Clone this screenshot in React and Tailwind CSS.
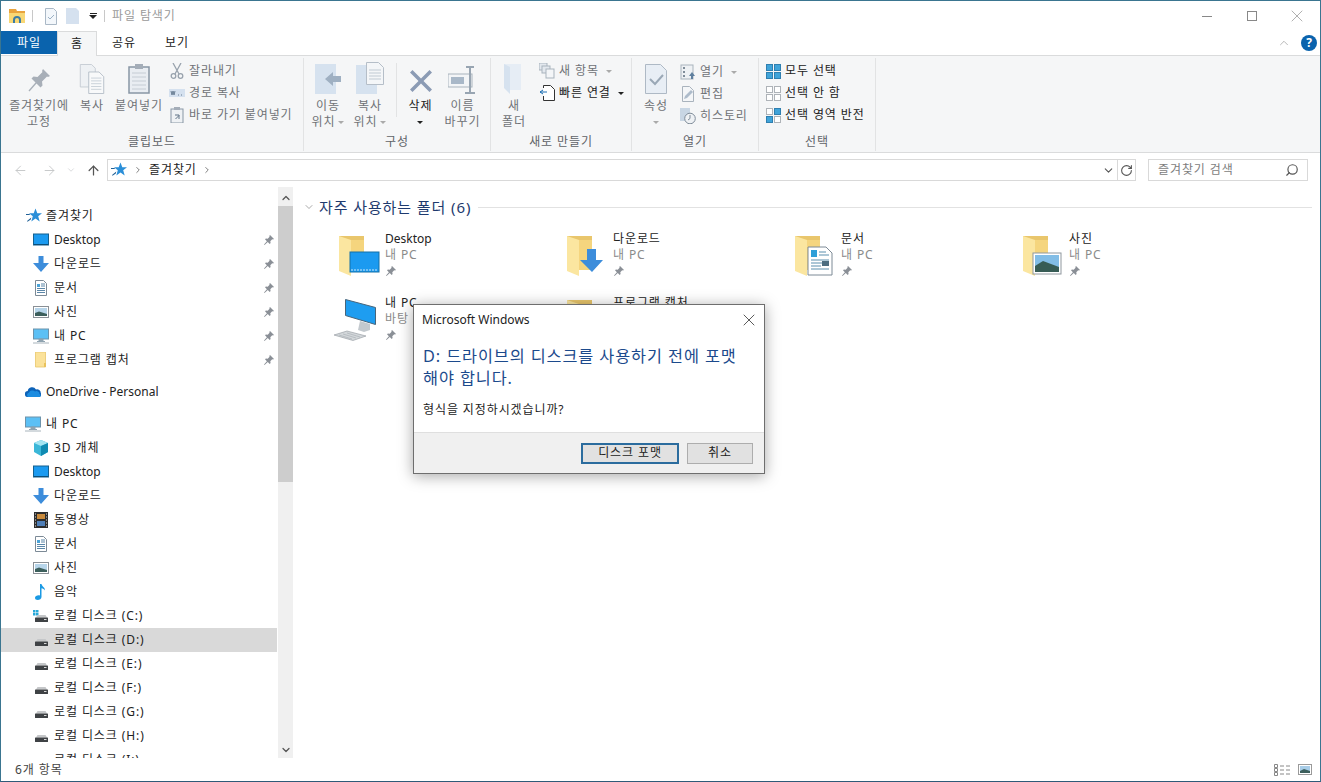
import React from "react";
import { ArrowLeft, ArrowRight, ArrowUp, ChevronDown, ChevronRight, ChevronUp, RotateCw, Search, X } from "lucide-react";

// small drawings used all over the window
function Pin({ className = "", color = "#8a8f96" }) {
  return (
    <svg width="12" height="12" viewBox="0 0 12 12" className={className}>
      <path d="M7 1l4 4-1 .6-.8-.3L7.300 7.200l.3 1.800-.9.9-1.900-1.900L1.500 11 1 10.500l2.900-3.300L2 5.300l.9-.9 1.800.3 1.900-1.900-.3-.8z" fill={color} />
    </svg>
  );
}

function Star({ size = 16 }) {
  return (
    <svg width={size} height={size} viewBox="0 0 16 16">
      <path d="M9.500 .5l1.800 4.800H16l-3.800 3 1.500 5.200-4.200-3-4.200 3 1.500-5.200-3.800-3h4.700z" fill="#2b8fd8" />
      <path d="M5.300 9.500L1 13l.5.800 3.300-2.300zM4 6H0v1h3.500z" fill="#1f5f95" />
    </svg>
  );
}

function Monitor() {
  return (
    <svg width="16" height="16" viewBox="0 0 16 16">
      <rect x="0.500" y="2" width="15" height="11" fill="#1b9af0" stroke="#14608f" />
      <path d="M1 12h14v1H1z" fill="#0c4e78" />
    </svg>
  );
}

function DownArrow({ size = 16 }) {
  return (
    <svg width={size} height={size} viewBox="0 0 16 16">
      <path d="M5.500 0h5v7H16l-8 9-8-9h5.500z" fill="#3d8ddb" />
    </svg>
  );
}

function DocIcon() {
  return (
    <svg width="16" height="16" viewBox="0 0 16 16">
      <path d="M2.500.5h8l3 3v12h-11z" fill="#fff" stroke="#7c8a96" />
      <path d="M4 4h3v3H4z" fill="#4aa3d8" />
      <path d="M8 4h4M8 6h4M4 8.500h8M4 10.500h8M4 12.500h8" stroke="#5c87a8" />
    </svg>
  );
}

function PhotoIcon() {
  return (
    <svg width="16" height="16" viewBox="0 0 16 16">
      <rect x="0.500" y="2.500" width="15" height="11" fill="#fff" stroke="#8a9096" />
      <rect x="2" y="4" width="12" height="8" fill="#b7d5ea" />
      <path d="M2 9l4-1.500L14 10v2H2z" fill="#3c5f5c" />
    </svg>
  );
}

function PcIcon() {
  return (
    <svg width="16" height="16" viewBox="0 0 16 16">
      <rect x="0.500" y="1" width="15" height="10" fill="#5cc0f5" stroke="#6d93ab" />
      <path d="M6 11h4v2H6zM4 13.500h8" fill="#8fa3b0" stroke="#8fa3b0" />
      <path d="M0 15h16" stroke="#a8b4bc" />
    </svg>
  );
}

function SmallFolder() {
  return (
    <svg width="16" height="16" viewBox="0 0 16 16">
      <path d="M2.500 0h10v15h-10z" fill="#fbe29a" stroke="#e8c76a" strokeWidth="0.800" />
      <path d="M11 11h2v4h-2z" fill="#e9c25c" />
    </svg>
  );
}

function Cloud() {
  return (
    <svg width="16" height="16" viewBox="0 0 16 16">
      <path d="M3 13a3 3 0 0 1-.3-6 4.500 4.500 0 0 1 8.300-1.500 3.700 3.700 0 0 1 4.800 3.500A2.500 2.500 0 0 1 14 13z" fill="#0d62b8" />
      <path d="M3 13a2.600 2.600 0 0 1 1-4.500 4 4 0 0 1 6-1 3 3 0 0 1 4.500 2.500c1 .2 1.500 1.500.5 3z" fill="#1c8ce0" />
    </svg>
  );
}

function Cube() {
  return (
    <svg width="16" height="16" viewBox="0 0 16 16">
      <path d="M8 0l7 3v9l-7 4-7-4V3z" fill="#3bb7d8" />
      <path d="M8 0l7 3-7 3-7-3z" fill="#a5e5f2" />
      <path d="M8 6l7-3v9l-7 4z" fill="#0f8bb2" />
    </svg>
  );
}

function Film() {
  return (
    <svg width="16" height="16" viewBox="0 0 16 16">
      <rect x="1" y="0" width="14" height="16" fill="#2d2d2d" />
      <rect x="4" y="2" width="8" height="5" fill="#c98a3b" />
      <rect x="4" y="9" width="8" height="5" fill="#4f7fb8" />
      <path d="M2 2h1M2 5h1M2 8h1M2 11h1M2 14h1M13 2h1M13 5h1M13 8h1M13 11h1M13 14h1" stroke="#ddd" />
    </svg>
  );
}

function Music() {
  return (
    <svg width="16" height="16" viewBox="0 0 16 16">
      <path d="M7 0h1.500c.3 2.500 3.500 3 3.500 6.500-1-1.500-2-2-3.500-2.300V13c0 2-2 3-3.700 3C3 16 2 15 2 13.700 2 12 4.500 11 7 11.500z" fill="#1b9ae4" />
    </svg>
  );
}

function Drive({ windows = false }) {
  return (
    <svg width="16" height="16" viewBox="0 0 16 16">
      {windows && <path d="M0 2h2.500v2.500H0zM3 2h2.500v2.500H3zM0 5h2.500v2.500H0zM3 5h2.500v2.500H3z" fill="#28a8d8" />}
      <path d="M3 9.500L4.500 7h8L14 9.500z" fill="#c5c7c9" />
      <rect x="2" y="9.500" width="13" height="4.500" rx="0.500" fill="#3f4245" />
      <path d="M11 11.500h2.500" stroke="#d8d8d8" />
    </svg>
  );
}

function FolderBig({ children }) {
  return (
    <svg width="42" height="42" viewBox="0 0 42 42">
      <path d="M1 1h25v34H1z" fill="#e9c66c" />
      <path d="M1 1l12 4v36L1 36z" fill="#fbe6a0" />
      <path d="M13 5h13v30H13z" fill="#f5d57e" />
      {children}
    </svg>
  );
}

const desktopOverlay = (
  <g>
    <rect x="12" y="17" width="29" height="20" fill="#1b9af0" stroke="#1470a8" />
    <path d="M13 35h27" stroke="#cfe8f8" strokeDasharray="2 1" />
  </g>
);
const downloadOverlay = <path d="M21 14h9v11h7L26 37 14 25h7z" fill="#3d8ddb" />;
const docOverlay = (
  <g>
    <path d="M14 12h18l6 6v22H14z" fill="#fff" stroke="#7d8a96" />
    <path d="M17 15h6v7h-6z" fill="#2f9fd8" />
    <path d="M25 17h7M25 20h10M17 25h18M17 28h18M17 31h10M17 34h18" stroke="#5a8fae" />
    <rect x="28" y="26" width="7" height="5" fill="#4c6d80" />
  </g>
);
const photoOverlay = (
  <g>
    <rect x="11" y="18" width="28" height="21" fill="#fff" stroke="#8f979e" />
    <rect x="13" y="20" width="24" height="17" fill="#82bde6" />
    <path d="M13 31l8-5 16 6v5H13z" fill="#375c55" />
  </g>
);

function ComputerBig() {
  return (
    <svg width="44" height="42" viewBox="0 0 44 42">
      <path d="M12.500 .5l30 8v17l-30-9z" fill="#1e9df0" stroke="#48657a" />
      <path d="M27 22l10 3v6l-6 2-6-2z" fill="#c3c9ce" />
      <path d="M1 36l13-4 19 5-13 4.500z" fill="#d3d7da" stroke="#8e969c" strokeWidth="0.600" />
      <path d="M6 36l13 4M10 35l13 4M14 34l13 4" stroke="#9aa2a8" strokeWidth="0.500" />
    </svg>
  );
}

const navRows = [
  { icon: <Monitor />, label: "Desktop", pin: true },
  { icon: <DownArrow />, label: "다운로드", pin: true },
  { icon: <DocIcon />, label: "문서", pin: true },
  { icon: <PhotoIcon />, label: "사진", pin: true },
  { icon: <PcIcon />, label: "내 PC", pin: true },
  { icon: <SmallFolder />, label: "프로그램 캡처", pin: true },
  { gap: true },
  { icon: <Cloud />, label: "OneDrive - Personal", top: true },
  { gap: true },
  { icon: <PcIcon />, label: "내 PC", top: true },
  { icon: <Cube />, label: "3D 개체" },
  { icon: <Monitor />, label: "Desktop" },
  { icon: <DownArrow />, label: "다운로드" },
  { icon: <Film />, label: "동영상" },
  { icon: <DocIcon />, label: "문서" },
  { icon: <PhotoIcon />, label: "사진" },
  { icon: <Music />, label: "음악" },
  { icon: <Drive windows />, label: "로컬 디스크 (C:)" },
  { icon: <Drive />, label: "로컬 디스크 (D:)", selected: true },
  { icon: <Drive />, label: "로컬 디스크 (E:)" },
  { icon: <Drive />, label: "로컬 디스크 (F:)" },
  { icon: <Drive />, label: "로컬 디스크 (G:)" },
  { icon: <Drive />, label: "로컬 디스크 (H:)" },
  { icon: <Drive />, label: "로컬 디스크 (I:)" },
];

const folders = [
  { name: "Desktop", sub: "내 PC", icon: <FolderBig>{desktopOverlay}</FolderBig> },
  { name: "다운로드", sub: "내 PC", icon: <FolderBig>{downloadOverlay}</FolderBig> },
  { name: "문서", sub: "내 PC", icon: <FolderBig>{docOverlay}</FolderBig> },
  { name: "사진", sub: "내 PC", icon: <FolderBig>{photoOverlay}</FolderBig> },
  { name: "내 PC", sub: "바탕 화면", icon: <ComputerBig />, computer: true },
  { name: "프로그램 캡처", sub: "바탕 화면", icon: <FolderBig /> },
];

function isLatin(label) {
  return /^[A-Z]/.test(label);
}

function BigButton({ icon, lines, width, caret, caretBelow, dark }) {
  return (
    <div className={`flex flex-col items-center shrink-0 ${width}`}>
      <div className="h-[36px] flex items-end justify-center">{icon}</div>
      <div className={`mt-[4px] text-center leading-[16px] ${dark ? "text-[#222]" : "text-[#6f7276]"}`}>
        {lines.map((l, i) => (
          <div key={i} className="whitespace-nowrap">
            {l}
            {caret && i === lines.length - 1 && <span className="inline-block ml-[3px] mb-[2px] border-x-[3px] border-t-[3px] border-x-transparent border-t-[#aaa]" />}
          </div>
        ))}
        {caretBelow && (
          <div className="h-[16px] flex items-center justify-center">
            <span className={`border-x-[3px] border-t-[3px] border-x-transparent ${dark ? "border-t-[#222]" : "border-t-[#aaa]"}`} />
          </div>
        )}
      </div>
    </div>
  );
}

function SmallButton({ icon, label, dark, caret }) {
  return (
    <div className={`flex items-center gap-[4px] h-[22px] whitespace-nowrap ${dark ? "text-[#222]" : "text-[#6f7276]"}`}>
      <div className="w-[16px] h-[16px] shrink-0">{icon}</div>
      <span>{label}</span>
      {caret && <span className={`ml-[3px] border-x-[3px] border-t-[3px] border-x-transparent ${dark ? "border-t-[#222]" : "border-t-[#aaa]"}`} />}
    </div>
  );
}

function Group({ width, label, children }) {
  return (
    <div className={`${width} shrink-0 h-[93px] mt-[2px] border-r border-[#e2e3e4] flex flex-col`}>
      <div className="h-[75px] flex">{children}</div>
      <div className="h-[18px] text-center leading-[18px] text-[#5f6368]">{label}</div>
    </div>
  );
}

function Tile({ color }) {
  return <div className={`w-[7px] h-[7px] border ${color}`} />;
}

function TileIcon({ tiles }) {
  return (
    <div className="grid grid-cols-2 gap-px w-[16px] h-[16px] p-px">
      {tiles.map((c, i) => (
        <Tile key={i} color={c} />
      ))}
    </div>
  );
}

const fill = "bg-[#3fa3d9] border-[#2f7fb0]";
const hollow = "bg-white border-[#aeb3b8]";

export default function App() {
  return (
    <div className="relative w-[1321px] h-[782px] overflow-hidden bg-white border border-[#3a7590] border-b-[#2f5a78] flex flex-col text-[12px] tracking-[0.9px] text-[#222] [font-family:'Noto_Sans','Noto_Sans_CJK_KR',sans-serif]">
      {/* title bar */}
      <div className="h-[30px] shrink-0 flex items-center pl-[8px]">
        <svg width="16" height="16" viewBox="0 0 16 16">
          <path d="M0 1h7l1 2h8v2H0z" fill="#e8a33d" />
          <path d="M0 5h16v10H0z" fill="#f8d775" />
          <path d="M4 15v-3a4 4 0 0 1 8 0v3h-2v-3a2 2 0 0 0-4 0v3z" fill="#3a7ca5" />
        </svg>
        <div className="w-px h-[12px] bg-[#c8c8c8] ml-[7px]" />
        <svg width="14" height="17" viewBox="0 0 14 17" className="ml-[11px]">
          <path d="M1.500.5h8l3 3v13h-11z" fill="#f3f7fb" stroke="#aab8c6" />
          <path d="M4 9l2 2 4-4" fill="none" stroke="#9ab0c4" />
        </svg>
        <svg width="14" height="16" viewBox="0 0 14 16" className="ml-[8px]">
          <path d="M0 0h10l3 3v13H0z" fill="#d5e1ef" />
        </svg>
        <div className="ml-[9px] flex flex-col items-center gap-px">
          <div className="w-[7px] h-px bg-[#222]" />
          <div className="border-x-[4px] border-t-[4px] border-x-transparent border-t-[#222]" />
        </div>
        <div className="w-px h-[12px] bg-[#c8c8c8] ml-[7px]" />
        <span className="ml-[7px] text-[#9a9a9a]">파일 탐색기</span>
        <div className="ml-auto flex items-center mr-[1px]">
          <div className="w-[45px] flex justify-center"><div className="w-[10px] h-px bg-[#888]" /></div>
          <div className="w-[45px] flex justify-center"><div className="w-[10px] h-[10px] border border-[#888]" /></div>
          <div className="w-[45px] flex justify-center"><X size={20} strokeWidth={0.8} color="#888" /></div>
        </div>
      </div>

      {/* tabs */}
      <div className="h-[25px] shrink-0 flex items-stretch border-b border-[#dadbdc] relative">
        <div className="w-[56px] bg-[#0a63ad] text-white flex items-center justify-center mb-[1px]">파일</div>
        <div className="w-[40px] h-[25px] bg-[#f5f6f7] border-x border-t border-[#dadbdc] flex items-center justify-center">홈</div>
        <div className="w-[54px] flex items-center justify-center">공유</div>
        <div className="w-[52px] flex items-center justify-center">보기</div>
        <div className="ml-auto flex items-center pr-[3px]">
          <ChevronUp size={14} strokeWidth={1} color="#888" className="mr-[10px]" />
          <div className="w-[16px] h-[16px] rounded-full bg-[#0a63ad] text-white font-bold flex items-center justify-center text-[12px] leading-none tracking-normal">?</div>
        </div>
      </div>

      {/* ribbon */}
      <div className="h-[97px] shrink-0 bg-[#f5f6f7] border-b border-[#dadbdc] flex">
        <Group width="w-[303px]" label="클립보드">
          <div className="flex pl-[7px]">
            <BigButton width="w-[62px]" lines={["즐겨찾기에", "고정"]} icon={
              <svg width="24" height="26" viewBox="0 0 24 26"><path d="M16 1l7 7-2 1-1-.5-5 5 .5 4-2 2-4-4-7 8-1-1 7-8-4-4 2-2 4 .5 5-5-.5-1z" fill="#a8afb8" /></svg>
            } />
            <BigButton width="w-[44px]" lines={["복사"]} icon={
              <svg width="26" height="30" viewBox="0 0 26 32">
                <path d="M.5.5h12l4 4v20H.5z" fill="#eef1f4" stroke="#c5ccd3" />
                <path d="M9.500 8.500h11l5 5v18h-16z" fill="#f8f9fa" stroke="#b5bec8" />
                <path d="M12 15h11M12 18h11M12 21h11M12 24h11M12 27h11" stroke="#c7d0d8" />
              </svg>
            } />
            <BigButton width="w-[50px]" lines={["붙여넣기"]} icon={
              <svg width="22" height="30" viewBox="0 0 22 30">
                <rect x="1" y="3" width="20" height="26" fill="#e9edf2" stroke="#8896a5" strokeWidth="1.500" />
                <rect x="7" y="0" width="8" height="5" fill="#a4adb8" />
                <path d="M4 9h14M4 13h14M4 17h14M4 21h14M4 25h14" stroke="#c5ccd4" />
              </svg>
            } />
            <div className="ml-[5px] mt-[2px] flex flex-col">
              <SmallButton label="잘라내기" icon={
                <svg width="16" height="16" viewBox="0 0 16 16" fill="none" stroke="#98a2ad" strokeWidth="1.300"><path d="M4 0l6 11M12 0L6 11" /><circle cx="4.500" cy="13" r="2.300" /><circle cx="11.500" cy="13" r="2.300" /></svg>
              } />
              <SmallButton label="경로 복사" icon={
                <svg width="16" height="16" viewBox="0 0 16 16"><rect x="0" y="4" width="16" height="8" fill="#d5e1ef" /><path d="M2 6l1 4 1-4 1 4 1-4M9 10h1M12 10h1" stroke="#6a7f94" fill="none" /></svg>
              } />
              <SmallButton label="바로 가기 붙여넣기" icon={
                <svg width="16" height="16" viewBox="0 0 16 16"><rect x="2" y="2" width="12" height="14" fill="#eef1f4" stroke="#8896a5" /><rect x="5" y="0" width="6" height="3" fill="#a4adb8" /><path d="M6 12V8h4M6.500 8l3.500 3.500" transform="rotate(90 8 10)" stroke="#5f7386" fill="none" /></svg>
              } />
            </div>
          </div>
        </Group>
        <Group width="w-[187px]" label="구성">
          <div className="flex pl-[3px]">
            <BigButton width="w-[42px]" caret lines={["이동", "위치"]} icon={
              <svg width="26" height="30" viewBox="0 0 26 30"><path d="M0 0h21v30H0z" fill="#d6e2ef" /><path d="M10 15l8-7v4h8v6h-8v4z" fill="#9fb0c2" /></svg>
            } />
            <BigButton width="w-[42px]" caret lines={["복사", "위치"]} icon={
              <svg width="28" height="32" viewBox="0 0 28 32"><path d="M0 3h21v29H0z" fill="#d6e2ef" /><path d="M10.500.5h12l5 5v17h-17z" fill="#f4f6f8" stroke="#b5bec8" /><path d="M13 8h12M13 11h12M13 14h12M13 17h12" stroke="#c0cad3" /></svg>
            } />
            <div className="w-px h-[54px] bg-[#e2e3e4] mt-[5px] ml-[5px]" />
            <BigButton width="w-[47px]" dark caretBelow lines={["삭제"]} icon={
              <svg width="26" height="26" viewBox="0 0 26 26"><path d="M2 4.500L4.500 2 13 10.500 21.500 2 24 4.500 15.500 13l8.500 8.500-2.500 2.500L13 15.500 4.500 24 2 21.500 10.500 13z" fill="#8b9bb4" /></svg>
            } />
            <BigButton width="w-[37px]" lines={["이름", "바꾸기"]} icon={
              <svg width="30" height="28" viewBox="0 0 30 28"><rect x="0" y="8" width="24" height="13" fill="#f3f5f7" stroke="#a9b3bd" /><rect x="3" y="11" width="13" height="7" fill="#a9b8c8" /><path d="M18 1h8M22 1v26M17 27h10" stroke="#98a5b2" strokeWidth="2" /></svg>
            } />
          </div>
        </Group>
        <Group width="w-[141px]" label="새로 만들기">
          <div className="flex pl-[3px]">
            <BigButton width="w-[40px]" lines={["새", "폴더"]} icon={
              <svg width="20" height="30" viewBox="0 0 20 30"><path d="M0 0h17v26H6z" fill="#e6edf5" /><path d="M0 0l6 3v27l-6-6z" fill="#d6e2ef" /></svg>
            } />
            <div className="ml-[5px] mt-[2px] flex flex-col">
              <SmallButton caret label="새 항목" icon={
                <svg width="16" height="16" viewBox="0 0 16 16"><rect x="0" y="0" width="8" height="7" fill="#e3e8ee" stroke="#a9b3bd" /><rect x="3" y="3" width="8" height="7" fill="#e3e8ee" stroke="#a9b3bd" /><rect x="7" y="6" width="8" height="9" fill="#f4f6f8" stroke="#a9b3bd" /></svg>
              } />
              <SmallButton dark caret label="빠른 연결" icon={
                <svg width="16" height="16" viewBox="0 0 16 16"><path d="M4.500 3V.5h7l4 4V15.500h-11V11" fill="#fff" stroke="#333" /><path d="M1 7h7M4 5l-3 2 3 2" fill="none" stroke="#1c6fb4" /></svg>
              } />
            </div>
          </div>
        </Group>
        <Group width="w-[127px]" label="열기">
          <div className="flex pl-[3px]">
            <BigButton width="w-[42px]" caretBelow lines={["속성"]} icon={
              <svg width="22" height="30" viewBox="0 0 22 30"><path d="M.5.500h15l6 6v23H.5z" fill="#e8eef5" stroke="#aeb9c5" /><path d="M5 15l5 5 8-9" fill="none" stroke="#9aa8b6" strokeWidth="2" /></svg>
            } />
            <div className="ml-[3px] mt-[3px] flex flex-col">
              <SmallButton caret label="열기" icon={
                <svg width="16" height="16" viewBox="0 0 16 16"><rect x="1" y="1" width="12" height="14" fill="#eef1f4" stroke="#a9b3bd" /><path d="M3 3h2v2H3zM3 7h2v2H3zM3 11h2v2H3z" fill="#7f8c99" /><path d="M12 8l3 4h-2v3h-2v-3H9z" fill="#5f7f9e" /></svg>
              } />
              <SmallButton label="편집" icon={
                <svg width="16" height="16" viewBox="0 0 16 16"><path d="M2.500.5h7l4 4v11h-11z" fill="#f4f6f8" stroke="#a9b3bd" /><path d="M4 13l1-3 6-6 2 2-6 6z" fill="#aebccb" /></svg>
              } />
              <SmallButton label="히스토리" icon={
                <svg width="16" height="16" viewBox="0 0 16 16"><rect x="0" y="0" width="10" height="13" fill="#c8d6e4" /><circle cx="10" cy="10.500" r="5.300" fill="#eef1f4" stroke="#7f8c99" /><path d="M10 7v3.500l-2 1.500" fill="none" stroke="#7f8c99" /></svg>
              } />
            </div>
          </div>
        </Group>
        <Group width="w-[117px]" label="선택">
          <div className="pl-[6px] mt-[2px] flex flex-col">
            <SmallButton dark label="모두 선택" icon={<TileIcon tiles={[fill, fill, fill, fill]} />} />
            <SmallButton dark label="선택 안 함" icon={<TileIcon tiles={[hollow, hollow, hollow, hollow]} />} />
            <SmallButton dark label="선택 영역 반전" icon={<TileIcon tiles={[hollow, fill, fill, hollow]} />} />
          </div>
        </Group>
      </div>

      {/* address bar */}
      <div className="h-[34px] shrink-0 flex items-center">
        <div className="w-[106px] flex items-center shrink-0 pl-[12px]">
          <ArrowLeft size={15} strokeWidth={1.500} color="#c4c6c8" />
          <ArrowRight size={15} strokeWidth={1.500} color="#c4c6c8" className="ml-[14px]" />
          <ChevronDown size={10} strokeWidth={1.500} color="#c4c6c8" className="ml-[9px]" />
          <ArrowUp size={15} strokeWidth={2} color="#555" className="ml-[10px]" />
        </div>
        <div className="w-[1029px] h-[22px] border border-[#d9d9d9] flex items-center pl-[3px] shrink-0">
          <Star size={16} />
          <ChevronRight size={10} strokeWidth={2} color="#666" className="ml-[6px]" />
          <span className="ml-[6px]">즐겨찾기</span>
          <ChevronRight size={10} strokeWidth={2} color="#666" className="ml-[5px]" />
          <ChevronDown size={13} strokeWidth={2} color="#555" className="ml-auto" />
          <div className="w-px h-full bg-[#d9d9d9] ml-[2px]" />
          <div className="w-[17px] flex justify-center"><RotateCw size={13} strokeWidth={2} color="#555" /></div>
        </div>
        <div className="ml-[12px] w-[160px] h-[22px] border border-[#d9d9d9] flex items-center pl-[9px] pr-[8px] text-[#7d7d7d] shrink-0">
          <span>즐겨찾기 검색</span>
          <Search size={14} strokeWidth={2} color="#555" className="ml-auto -scale-x-100" />
        </div>
      </div>

      {/* sidebar and content */}
      <div className="flex-1 min-h-0 flex">
        <div className="w-[276px] shrink-0 overflow-hidden pt-[17px]">
          <div className="h-[24px] flex items-center pl-[25px]">
            <Star size={16} />
            <span className="ml-[4px]">즐겨찾기</span>
          </div>
          {navRows.map((r, i) =>
            r.gap ? (
              <div key={i} className="h-[8px]" />
            ) : (
              <div key={i} className={`h-[24px] flex items-center shrink-0 ${r.top ? "pl-[24px]" : "pl-[32px]"} ${r.selected ? "bg-[#d9d9d9]" : ""}`}>
                <div className="w-[16px] h-[16px]">{r.icon}</div>
                <span className={`ml-[5px] whitespace-nowrap ${isLatin(r.label) ? "tracking-normal" : ""}`}>{r.label}</span>
                {r.pin && <Pin className="ml-auto mr-[2px]" />}
              </div>
            )
          )}
        </div>
        <div className="w-[15px] shrink-0 ml-[1px] bg-[#f0f0f0] flex flex-col items-center">
          <div className="h-[19px] flex items-center pt-[2px]"><ChevronUp size={12} strokeWidth={2.500} color="#555" /></div>
          <div className="w-full h-[276px] bg-[#cdcdcd]" />
          <div className="mt-auto h-[16px] flex items-center"><ChevronDown size={12} strokeWidth={2.500} color="#555" /></div>
        </div>
        <div className="flex-1 min-w-0 pt-[10px] pl-[10px] pr-[8px]">
          <div className="flex items-center h-[20px]">
            <ChevronDown size={12} strokeWidth={1} color="#555" />
            <span className="ml-[4px] text-[15px] text-[#1e3a6e] whitespace-nowrap">자주 사용하는 폴더 (6)</span>
            <div className="ml-[7px] flex-1 h-px bg-[#e2e2e2]" />
          </div>
          <div className="grid grid-cols-[228px_228px_228px_228px] auto-rows-[64px] pl-[30px] mt-[15px]">
            {folders.map((f) => (
              <div key={f.name} className="flex items-start">
                <div className={`w-[50px] shrink-0 pt-[3px] flex ${f.computer ? "justify-start" : "justify-center pl-[2px]"}`}>{f.icon}</div>
                <div className="ml-[2px] leading-[16px] -mt-[1px]">
                  <div className={`whitespace-nowrap ${isLatin(f.name) ? "tracking-normal" : ""}`}>{f.name}</div>
                  <div className="text-[#8a8a8a] whitespace-nowrap">{f.sub}</div>
                  <Pin className="mt-[2px]" />
                </div>
              </div>
            ))}
          </div>
        </div>
      </div>

      {/* status bar */}
      <div className="h-[23px] shrink-0 flex items-center pl-[14px] pr-[8px] text-[#444]">
        <span>6개 항목</span>
        <div className="ml-auto flex items-center gap-[8px]">
          <svg width="16" height="12" viewBox="0 0 16 12" fill="none" stroke="#888">
            <path d="M.5.500h3v3h-3zM.5 4.500h3v3h-3zM.5 8.500h3v3h-3zM6 2h4M12 2h4M6 6h4M12 6h4M6 10h4M12 10h4" />
          </svg>
          <svg width="14" height="11" viewBox="0 0 14 11">
            <rect x="0.500" y="0.500" width="13" height="10" fill="#fff" stroke="#9a9a9a" />
            <rect x="2" y="2" width="10" height="7" fill="#a8cde8" />
            <path d="M2 7l4-2 6 2v2H2z" fill="#3c5f5c" />
          </svg>
        </div>
      </div>

      {/* format dialog */}
      <div className="absolute left-[412px] top-[303px] w-[352px] h-[170px] bg-white border border-[#6e6e6e] shadow-[0_2px_14px_rgba(0,0,0,0.35)] flex flex-col">
        <div className="h-[29px] shrink-0 flex items-center pl-[8px] pr-[5px]">
          <span className="text-[#222] tracking-normal">Microsoft Windows</span>
          <X size={20} strokeWidth={0.9} color="#222" className="ml-auto" />
        </div>
        <div className="flex-1 pl-[9px] pr-[12px] pt-[11px]">
          <div className="text-[16.3px] leading-[22px] text-[#1c4a8c] whitespace-nowrap">
            D: 드라이브의 디스크를 사용하기 전에 포맷
            <br />
            해야 합니다.
          </div>
          <div className="mt-[12px] leading-[18px] text-[#222]">형식을 지정하시겠습니까?</div>
        </div>
        <div className="h-[41px] shrink-0 bg-[#f0f0f0] border-t border-[#dfdfdf] flex items-center justify-end pr-[11px] gap-[8px]">
          <div className="w-[98px] h-[21px] bg-[#e1e1e1] border-2 border-[#2b6c9e] flex items-center justify-center text-[#222]">디스크 포맷</div>
          <div className="w-[66px] h-[21px] bg-[#e1e1e1] border border-[#adadad] flex items-center justify-center text-[#222]">취소</div>
        </div>
      </div>
    </div>
  );
}
